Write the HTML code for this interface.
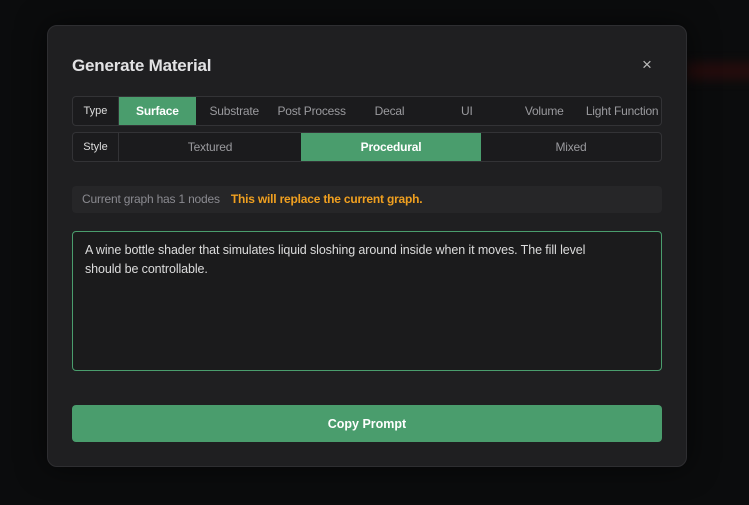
<!DOCTYPE html>
<html><head><style>
*{box-sizing:border-box;margin:0;padding:0}
body{width:749px;height:505px;background:#0b0c0d;font-family:"Liberation Sans",sans-serif;position:relative;overflow:hidden}
.glow{position:absolute;left:686px;top:62px;width:80px;height:18px;background:#2a0d0d;filter:blur(5px);opacity:.8}
.modal{position:absolute;left:47px;top:25px;width:640px;height:442px;background:#1f1f21;border:1px solid #2e2e31;border-radius:10px;box-shadow:0 0 30px rgba(0,0,0,.6)}
.title{position:absolute;left:24px;top:30px;font-size:17px;font-weight:bold;color:#e2e2e4;letter-spacing:-0.2px}
.close{position:absolute;left:594px;top:29px;font-size:17px;color:#bbb}
.row{position:absolute;left:24px;width:590px;height:30px;border:1px solid #333336;border-radius:4px;display:flex;overflow:hidden;background:#1b1b1d}
.lab{width:46px;border-right:1px solid #333336;font-size:11px;color:#ddd;display:flex;align-items:center;justify-content:center}
.t{display:flex;align-items:center;justify-content:center;font-size:12px;color:#9a9a9e;white-space:nowrap;letter-spacing:-0.2px}
.on{background:#4a9d6d;color:#fff;font-weight:bold}
.info{position:absolute;left:24px;top:160px;width:590px;height:27px;background:#262628;border-radius:4px;font-size:12px;line-height:27px;padding-left:10px;color:#8a8a90;letter-spacing:-0.2px}
.info b{color:#f0a020;margin-left:8px}
.ta{position:absolute;left:24px;top:205px;width:590px;height:140px;border:1px solid #4a9d6d;border-radius:4px;background:#1b1b1c;color:#dcdcdc;font-size:12.5px;line-height:19px;padding:9px 40px 10px 12px;letter-spacing:-0.1px}
.btn{position:absolute;left:24px;top:379px;width:590px;height:37px;background:#4a9d6d;border-radius:4px;color:#fff;font-weight:bold;font-size:12.5px;display:flex;align-items:center;justify-content:center}
</style></head><body>
<div class="glow"></div>
<div class="modal">
<div class="title">Generate Material</div>
<div class="close">×</div>
<div class="row" style="top:70px">
<div class="lab">Type</div>
<div class="t on" style="width:77px">Surface</div>
<div class="t" style="width:77px">Substrate</div>
<div class="t" style="width:78px">Post Process</div>
<div class="t" style="width:78px">Decal</div>
<div class="t" style="width:77px">UI</div>
<div class="t" style="width:78px">Volume</div>
<div class="t" style="width:78px">Light Function</div>
</div>
<div class="row" style="top:106px">
<div class="lab">Style</div>
<div class="t" style="width:182px">Textured</div>
<div class="t on" style="width:180px">Procedural</div>
<div class="t" style="flex:1">Mixed</div>
</div>
<div class="info">Current graph has 1 nodes <b>This will replace the current graph.</b></div>
<div class="ta">A wine bottle shader that simulates liquid sloshing around inside when it moves. The fill level should be controllable.</div>
<div class="btn">Copy Prompt</div>
</div>
</body></html>
